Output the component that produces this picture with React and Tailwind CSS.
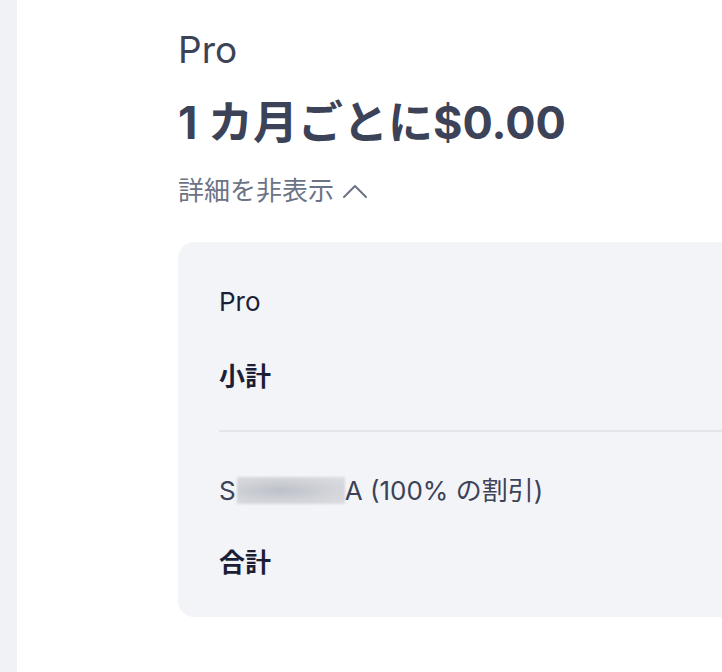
import React from 'react';

const FONT = { fontFamily: 'Inter, "Noto Sans CJK JP", sans-serif' };

function ChevronUp() {
    return (
        <svg width="26" height="16" viewBox="0 0 26 16" fill="none" className="ml-[8px]">
            <path d="M2 14 L13 3 L24 14" stroke="#6b7385" strokeWidth="2" strokeLinecap="round" strokeLinejoin="round" />
        </svg>
    );
}

export default function App() {
    return (
        <div className="w-[722px] h-[672px] overflow-hidden flex bg-white" style={FONT}>
            {/* left rail */}
            <div className="w-[17px] shrink-0 bg-[#f1f2f5]" />

            <div className="flex-1 pl-[161px] pt-[26px]">
                <div className="text-[37px] leading-[48px] text-[#3c4257]">Pro</div>
                <div className="mt-[23px] text-[45px] leading-[52px] font-bold text-[#3c4257] whitespace-nowrap">
                    1 カ月ごとに$0.00
                </div>
                <div className="mt-[25px] flex items-center text-[26px] leading-[34px] text-[#6b7385]">
                    詳細を非表示
                    <ChevronUp />
                </div>

                {/* summary card */}
                <div className="mt-[34px] w-[640px] rounded-[16px] bg-[#f3f4f8] pl-[41px] pt-[41px] pb-[37px]">
                    <div className="h-[36px] flex items-center text-[26px] text-[#1a1f36]">Pro</div>
                    <div className="mt-[39px] h-[36px] flex items-center text-[26px] font-semibold text-[#1a1f36]">小計</div>
                    <div className="mt-[36px] border-t-2 border-[#e3e5ea]" />
                    <div className="mt-[40px] h-[36px] flex items-center text-[26px] text-[#3c4257] whitespace-nowrap">
                        S
                        <span className="inline-block ml-[1px] w-[108px] h-[27px] bg-[radial-gradient(ellipse_at_40%_50%,#bdc1c8,#d3d5da_60%,#dcdee2)] blur-[1px]" />
                        A (100% の割引)
                    </div>
                    <div className="mt-[36px] h-[36px] flex items-center text-[26px] font-semibold text-[#1a1f36]">合計</div>
                </div>
            </div>
        </div>
    );
}
